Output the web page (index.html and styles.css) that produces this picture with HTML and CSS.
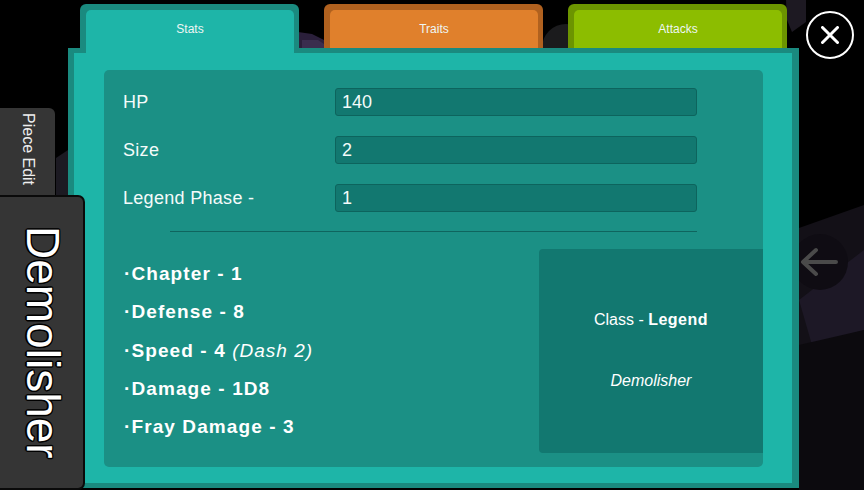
FILE: index.html
```html
<!DOCTYPE html>
<html>
<head>
<meta charset="utf-8">
<link rel="stylesheet" href="styles.css">
</head>
<body>
<div class="stage">
  <svg class="scene" width="864" height="490" viewBox="0 0 864 490">
    <polygon points="298,32 312,34 336,46 330,48 298,48" fill="#2a1f3a"/>
    <polygon points="302,40 318,40 330,48 302,48" fill="#3a2d4e"/>
    <circle cx="566" cy="48" r="24" fill="#1b1b1d"/>
    <polygon points="786,0 806,0 806,22 792,32 787,20" fill="#1d1922"/>
    <polygon points="56,158 68,150 68,196 56,196" fill="#1c1a22"/>
    <polygon points="799,228 864,205 864,490 799,490" fill="#131017"/>
    <polygon points="799,300 864,250 864,330 812,345" fill="#1d1826"/>
    <polygon points="799,345 864,330 864,490 799,490" fill="#0c0a0e"/>
    <circle cx="820" cy="262" r="28" fill="#0f0c13"/>
    <path d="M836 262 H804 M816 250 L803 262 L816 274" stroke="#4a4a4a" stroke-width="4" fill="none" stroke-linecap="round" stroke-linejoin="round"/>
  </svg>

  <div class="window">
    <div class="tabs">
      <div class="tab tab-stats"><div class="tab-face">Stats</div></div>
      <div class="tab tab-traits"><div class="tab-face">Traits</div></div>
      <div class="tab tab-attacks"><div class="tab-face">Attacks</div></div>
    </div>
    <div class="panel">
      <div class="card">
        <div class="fields">
          <div class="field"><span class="label">HP</span><div class="input">140</div></div>
          <div class="field"><span class="label">Size</span><div class="input">2</div></div>
          <div class="field"><span class="label">Legend Phase -</span><div class="input">1</div></div>
        </div>
        <div class="divider"></div>
        <div class="bottom">
          <ul class="stat-list">
            <li>·Chapter - 1</li>
            <li>·Defense - 8</li>
            <li>·Speed - 4 <em>(Dash 2)</em></li>
            <li>·Damage - 1D8</li>
            <li>·Fray Damage - 3</li>
          </ul>
          <div class="class-box">
            <div class="class-line">Class - <strong>Legend</strong></div>
            <div class="class-name">Demolisher</div>
          </div>
        </div>
      </div>
    </div>
  </div>

  <button class="close" aria-label="Close">
    <svg width="18" height="18" viewBox="0 0 18 18"><path d="M1.5 1.5 L16.5 16.5 M16.5 1.5 L1.5 16.5" stroke="#fff" stroke-width="3" stroke-linecap="round"/></svg>
  </button>

  <div class="side-tab piece-edit"><span>Piece Edit</span></div>
  <div class="side-tab name-tab"><span>Demolisher</span></div>
</div>
</body>
</html>
```

FILE: styles.css
```css
* { box-sizing: border-box; }
html, body { margin: 0; padding: 0; background: #000; }
body { font-family: "Liberation Sans", Arial, sans-serif; color: #fff; }

.stage {
  position: relative;
  width: 864px;
  height: 490px;
  overflow: hidden;
  background: #000;
  padding: 4px 0 0 68px;
}

.scene { position: absolute; left: 0; top: 0; z-index: 0; }

.window { position: relative; z-index: 1; width: 731px; }

.tabs {
  display: flex;
  gap: 25px;
  padding-left: 12px;
  height: 44px;
  align-items: flex-start;
}
.tab {
  width: 219px;
  height: 44px;
  padding: 6px 5px 0 6px;
  border-radius: 6px 6px 0 0;
}
.tab-face {
  height: 100%;
  border-radius: 5px 5px 0 0;
  font-size: 12px;
  line-height: 14px;
  padding-top: 12px;
  text-align: center;
  color: #eef6f4;
}
.tab-stats { background: #1a8a7f; height: 49px; position: relative; z-index: 2; }
.tab-stats .tab-face { background: #1eb5a8; }
.tab-traits { background: #b0611f; }
.tab-traits .tab-face { background: #e0802c; }
.tab-attacks { background: #6c9400; }
.tab-attacks .tab-face { background: #8cbd00; }

.panel {
  height: 440px;
  background: #1eb5a8;
  border-style: solid;
  border-color: #1a8a7f;
  border-width: 5px 7px 5px 6px;
  padding: 17px 29px 16px 30px;
}
.card {
  height: 100%;
  background: #1b9085;
  border-radius: 5px;
  padding: 18px 0 0 19px;
}

.fields { display: flex; flex-direction: column; gap: 20px; }
.field { display: flex; align-items: center; height: 28px; }
.label { width: 212px; font-size: 18px; letter-spacing: 0.3px; color: #f4fbfa; }
.input {
  width: 362px;
  height: 28px;
  background: #127870;
  border: 1px solid #0d645d;
  border-radius: 3px;
  padding-left: 6px;
  font-size: 18px;
  line-height: 26px;
  color: #f4fbfa;
}

.divider {
  margin: 19px 0 0 47px;
  width: 527px;
  height: 1px;
  background: #0f655e;
}

.bottom {
  display: flex;
  justify-content: space-between;
  margin-top: 17px;
}
.stat-list {
  list-style: none;
  margin: 0 0 0 1px;
  padding: 6px 0 0 0;
}
.stat-list li {
  height: 38.3px;
  line-height: 38px;
  font-size: 19px;
  font-weight: bold;
  letter-spacing: 1.1px;
  white-space: nowrap;
}
.stat-list em { font-weight: normal; font-style: italic; letter-spacing: 1px; }

.class-box {
  width: 224px;
  height: 204px;
  background: #127870;
  border-radius: 4px 0 0 4px;
  padding-top: 61px;
  text-align: center;
  font-size: 16px;
  line-height: 20px;
}
.class-line strong { letter-spacing: 0.5px; }
.class-name { margin-top: 41px; font-style: italic; }

.close {
  position: absolute;
  left: 806px;
  top: 11px;
  width: 48px;
  height: 48px;
  border: 2px solid #fff;
  border-radius: 50%;
  background: #000;
  padding: 0;
  display: flex;
  align-items: center;
  justify-content: center;
  z-index: 3;
}

.side-tab {
  position: absolute;
  left: 0;
  background: #353535;
  display: flex;
  justify-content: center;
  z-index: 4;
}
.side-tab span { writing-mode: vertical-rl; }
.piece-edit {
  top: 108px;
  width: 55px;
  height: 92px;
  border-radius: 0 6px 0 0;
  align-items: flex-start;
  padding-top: 5px;
  font-size: 16px;
  color: #eeeeee;
}
.name-tab {
  top: 195px;
  width: 85px;
  height: 295px;
  border: 2px solid #0a0a0a;
  border-left: 0;
  border-radius: 0 7px 7px 0;
  align-items: center;
  z-index: 5;
}
.name-tab span {
  font-size: 46px;
  color: #fff;
  line-height: 50px;
  margin-left: 2px;
  text-shadow: 1.5px 0 0 #000, -1.5px 0 0 #000, 0 1.5px 0 #000, 0 -1.5px 0 #000,
               1px 1px 0 #000, -1px -1px 0 #000, 1px -1px 0 #000, -1px 1px 0 #000;
}
```
